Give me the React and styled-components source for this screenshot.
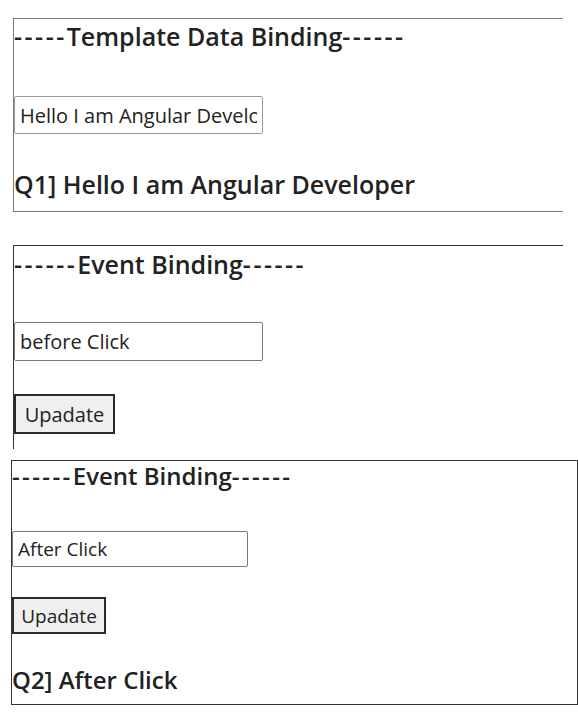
import React, { useState } from "react";
import styled, { createGlobalStyle } from "styled-components";

const GlobalStyle = createGlobalStyle`
  body {
    margin: 0;
    background: #fff;
    color: #222;
    font-family: "Open Sans", "Noto Sans", sans-serif;
  }
`;

const Page = styled.main`
  display: flex;
  flex-direction: column;
  padding-top: 18px;
`;

const Panel = styled.section`
  box-sizing: border-box;
  display: flex;
  flex-direction: column;
  align-items: flex-start;
  margin-left: ${(p) => p.$left}px;
  margin-top: ${(p) => p.$gap}px;
  width: ${(p) => p.$width}px;
  height: ${(p) => p.$height}px;
  border: 0 solid ${(p) => p.$line};
  border-top-width: 1px;
  border-left-width: 1px;
  border-bottom-width: ${(p) => (p.$bottom ? 1 : 0)}px;
  border-right-width: ${(p) => (p.$right ? 1 : 0)}px;
`;

const Heading = styled.h2`
  margin: ${(p) => p.$top || 0}px 0 0;
  font-size: ${(p) => p.$size}px;
  font-weight: 600;
  line-height: 32px;
  white-space: nowrap;
`;

// the dashes around the titles are wider in the original font
const Dashes = styled.span`
  letter-spacing: 0.1em;
`;

const Field = styled.input`
  box-sizing: border-box;
  margin-top: ${(p) => p.$top}px;
  width: ${(p) => p.$width}px;
  height: ${(p) => p.$height}px;
  padding: 0 5px;
  border: 1px solid ${(p) => p.$line};
  border-radius: 2px;
  font-family: inherit;
  font-size: ${(p) => p.$size}px;
  color: #222;
  background: #fff;
  outline: none;
`;

const Button = styled.button`
  box-sizing: border-box;
  margin-top: ${(p) => p.$top}px;
  width: ${(p) => p.$width}px;
  height: ${(p) => p.$height}px;
  padding: 0;
  border: 2px solid #2b2b2b;
  background: #efefef;
  font-family: inherit;
  font-size: ${(p) => p.$size}px;
  color: #222;
  cursor: pointer;
`;

const Result = styled.h3`
  margin: ${(p) => p.$top}px 0 0;
  font-size: ${(p) => p.$size}px;
  font-weight: 600;
  line-height: 32px;
  white-space: nowrap;
`;

const Title = ({ size, top, left, right, children }) => (
  <Heading $size={size} $top={top}>
    <Dashes>{left}</Dashes>
    {children}
    <Dashes>{right}</Dashes>
  </Heading>
);

export default function App() {
  const [name, setName] = useState("Hello I am Angular Developer");
  const [before, setBefore] = useState("before Click");
  const [after, setAfter] = useState("After Click");

  return (
    <Page>
      <GlobalStyle />
      <Panel $left={13} $gap={0} $width={550} $height={194} $line="#7a7a7a" $bottom>
        <Title size={25} top={1} left="-----" right="------">Template Data Binding</Title>
        <Field
          $top={44}
          $width={249}
          $height={38}
          $size={20}
          $line="#9a9a9a"
          value={name}
          onChange={(e) => setName(e.target.value)}
        />
        <Result $top={34} $size={25}>Q1] {name}</Result>
      </Panel>

      <Panel $left={13} $gap={33} $width={550} $height={204} $line="#333">
        <Title size={25} top={2} left="------" right="------">Event Binding</Title>
        <Field
          $top={42}
          $width={249}
          $height={39}
          $size={20}
          $line="#777"
          value={before}
          onChange={(e) => setBefore(e.target.value)}
        />
        <Button $top={33} $width={101} $height={40} $size={20} onClick={() => setBefore("After Click")}>
          Upadate
        </Button>
      </Panel>

      <Panel $left={11} $gap={11} $width={567} $height={245} $line="#333" $bottom $right>
        <Title size={24} top={-1} left="------" right="------">Event Binding</Title>
        <Field
          $top={39}
          $width={236}
          $height={36}
          $size={19}
          $line="#777"
          value={after}
          onChange={(e) => setAfter(e.target.value)}
        />
        <Button $top={30} $width={94} $height={37} $size={19} onClick={() => setAfter("After Click")}>
          Upadate
        </Button>
        <Result $top={30} $size={24}>Q2] {after}</Result>
      </Panel>
    </Page>
  );
}
